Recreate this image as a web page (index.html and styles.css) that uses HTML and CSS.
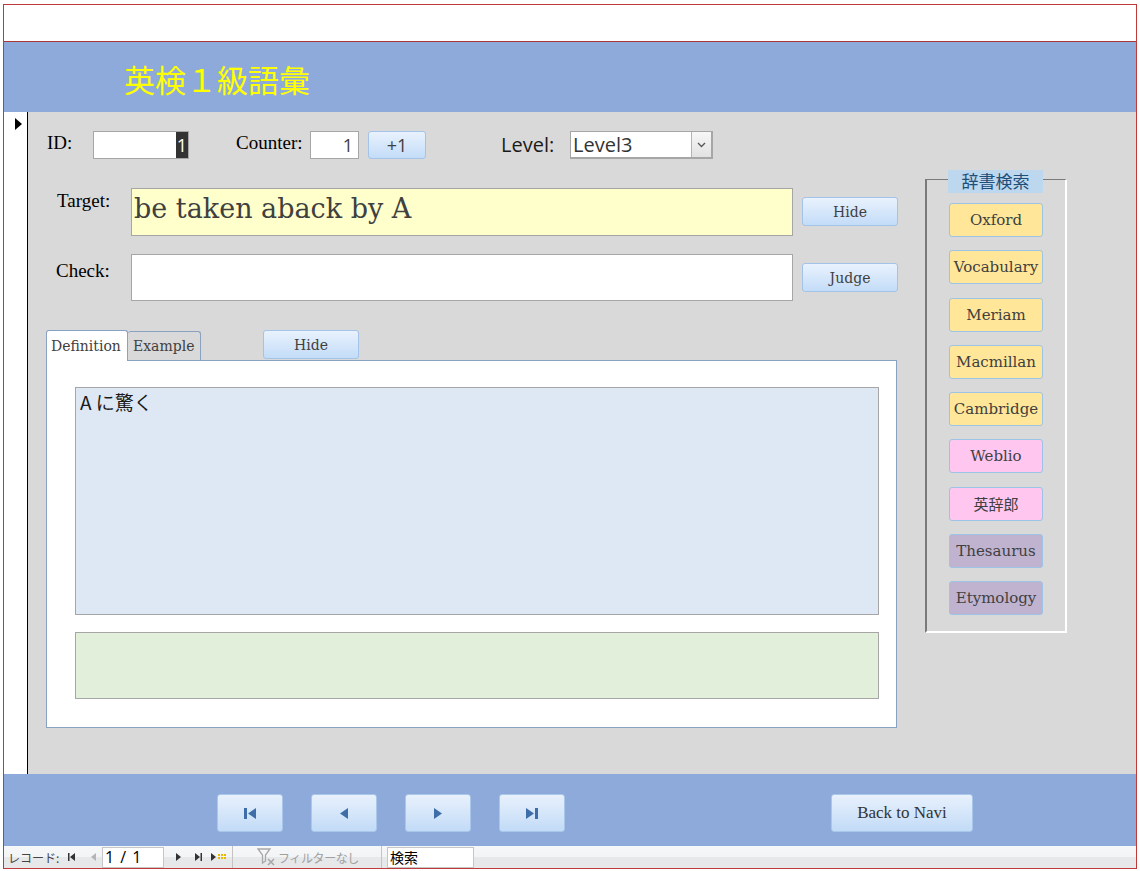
FILE: index.html
```html
<!DOCTYPE html>
<html lang="ja">
<head>
<meta charset="utf-8">
<title>英検１級語彙</title>
<link rel="stylesheet" href="styles.css">
</head>
<body>
<div class="frame">
  <div class="topstrip"></div>
  <div class="header"><h1 class="title">英検１級語彙</h1></div>
  <div class="body">
    <div class="selector">
      <svg width="8" height="12" viewBox="0 0 8 12"><polygon points="0,0 7,6 0,12" fill="#000"/></svg>
    </div>
    <div class="content">
      <div class="form">
        <div class="row row1">
          <span class="lbl lbl-id">ID:</span>
          <div class="field field-id"><span class="sel">1</span></div>
          <span class="lbl lbl-counter">Counter:</span>
          <div class="field field-counter">1</div>
          <button class="btn btn-plus">+1</button>
          <span class="lbl-level">Level:</span>
          <div class="combo">
            <span class="combo-text">Level3</span>
            <span class="combo-btn"><svg width="9" height="6" viewBox="0 0 9 6"><polyline points="1,1 4.5,4.5 8,1" fill="none" stroke="#555" stroke-width="1.3"/></svg></span>
          </div>
        </div>
        <div class="row row2">
          <span class="lbl lbl-target">Target:</span>
          <div class="field field-big field-target">be taken aback by A</div>
          <button class="btn btn-side">Hide</button>
        </div>
        <div class="row row3">
          <span class="lbl lbl-check">Check:</span>
          <div class="field field-big field-check"></div>
          <button class="btn btn-side">Judge</button>
        </div>
        <div class="tabbar">
          <div class="tab tab-active">Definition</div>
          <div class="tab">Example</div>
          <button class="btn btn-tabhide">Hide</button>
        </div>
        <div class="panel">
          <div class="defbox">A に驚く</div>
          <div class="exbox"></div>
        </div>
      </div>
      <div class="dict">
        <div class="legend">辞書検索</div>
        <div class="dict-list">
          <button class="dbtn yellow">Oxford</button>
          <button class="dbtn yellow">Vocabulary</button>
          <button class="dbtn yellow">Meriam</button>
          <button class="dbtn yellow">Macmillan</button>
          <button class="dbtn yellow">Cambridge</button>
          <button class="dbtn pink">Weblio</button>
          <button class="dbtn pink">英辞郎</button>
          <button class="dbtn purple">Thesaurus</button>
          <button class="dbtn purple">Etymology</button>
        </div>
      </div>
    </div>
  </div>
  <div class="navbar">
    <button class="nbtn"><svg width="12" height="11" viewBox="0 0 12 11"><rect x="0" y="0" width="3" height="11" fill="#3d6ea8"/><polygon points="12,0 4,5.5 12,11" fill="#3d6ea8"/></svg></button>
    <button class="nbtn"><svg width="8" height="11" viewBox="0 0 8 11"><polygon points="8,0 0,5.5 8,11" fill="#3d6ea8"/></svg></button>
    <button class="nbtn"><svg width="8" height="11" viewBox="0 0 8 11"><polygon points="0,0 8,5.5 0,11" fill="#3d6ea8"/></svg></button>
    <button class="nbtn"><svg width="12" height="11" viewBox="0 0 12 11"><polygon points="0,0 8,5.5 0,11" fill="#3d6ea8"/><rect x="9" y="0" width="3" height="11" fill="#3d6ea8"/></svg></button>
    <button class="nbtn nbtn-back">Back to Navi</button>
  </div>
  <div class="status">
    <span class="st-label">レコード:</span>
    <svg class="st-first" width="7" height="8" viewBox="0 0 7 8"><rect x="0" y="0" width="1.5" height="8" fill="#333"/><polygon points="7,0 2,4 7,8" fill="#333"/></svg>
    <svg class="st-prev" width="5" height="8" viewBox="0 0 5 8"><polygon points="5,0 0,4 5,8" fill="#b5b5b5"/></svg>
    <div class="st-input">1 / 1</div>
    <svg class="st-next" width="5" height="8" viewBox="0 0 5 8"><polygon points="0,0 5,4 0,8" fill="#333"/></svg>
    <svg class="st-last" width="7" height="8" viewBox="0 0 7 8"><polygon points="0,0 5,4 0,8" fill="#333"/><rect x="5.5" y="0" width="1.5" height="8" fill="#333"/></svg>
    <svg class="st-new" width="15" height="8" viewBox="0 0 15 8"><polygon points="0,0 5,4 0,8" fill="#333"/><g fill="#e8b800"><rect x="7" y="1" width="2" height="2"/><rect x="10" y="1" width="2" height="2"/><rect x="13" y="1" width="2" height="2"/><rect x="7" y="4" width="2" height="2"/><rect x="10" y="4" width="2" height="2"/><rect x="13" y="4" width="2" height="2"/></g></svg>
    <span class="st-sep st-sep1"></span>
    <span class="st-filter">
      <svg width="18" height="18" viewBox="0 0 18 18"><polygon points="1,1 13,1 8.5,7 8.5,13 5.5,15 5.5,7" fill="none" stroke="#a8a8a8" stroke-width="1.3"/><path d="M11 11 L17 17 M17 11 L11 17" stroke="#a8a8a8" stroke-width="1.6"/></svg>
      <span>フィルターなし</span>
    </span>
    <span class="st-sep st-sep2"></span>
    <div class="st-search">検索</div>
  </div>
</div>
</body>
</html>
```

FILE: styles.css
```css
* { box-sizing: border-box; }

body {
  margin: 0;
  background: #fff;
  font-family: "Liberation Serif", serif;
}

button {
  font: inherit;
  margin: 0;
  padding: 0;
  cursor: pointer;
}

.frame {
  margin: 4px 0 0 3px;
  width: 1134px;
  height: 865px;
  border: 1px solid #bf3b3b;
  display: flex;
  flex-direction: column;
  overflow: hidden;
}

.topstrip {
  flex: none;
  height: 37px;
  background: #fff;
  border-bottom: 1px solid #a83838;
}

.header {
  flex: none;
  height: 70px;
  background: #8eaadb;
  padding: 14px 0 0 120px;
}

.title {
  margin: 0;
  font-family: "Noto Sans CJK JP", sans-serif;
  font-weight: 400;
  font-size: 31px;
  line-height: normal;
  color: #ffff00;
}

.body {
  flex: none;
  height: 662px;
  background: #d9d9d9;
  display: flex;
}

.selector {
  flex: none;
  width: 24px;
  background: #fff;
  border-right: 1px solid #000;
  padding: 6px 0 0 11px;
}

.selector svg { display: block; }

.content {
  flex: 1;
  display: flex;
}

.form {
  flex: none;
  width: 872px;
}

.row {
  display: flex;
  align-items: flex-start;
}

.row1 { margin-top: 19px; height: 28px; }
.row2 { margin-top: 29px; }
.row3 { margin-top: 18px; }

.lbl {
  font-family: "Liberation Serif", serif;
  font-size: 19px;
  line-height: 24px;
  color: #000;
  flex: none;
}

.lbl-id { margin-left: 19px; width: 46px; }
.lbl-counter { margin-left: 47px; width: 74px; }
.lbl-target { margin-left: 29px; width: 74px; margin-top: 1px; }
.lbl-check { margin-left: 28px; width: 75px; margin-top: 5px; }

.field {
  flex: none;
  background: #fff;
  border: 1px solid #a6a6a6;
}

.field-id {
  width: 96px;
  height: 28px;
  display: flex;
  justify-content: flex-end;
}

.sel {
  width: 12px;
  height: 100%;
  background: #333;
  color: #fff;
  font-family: "Open Sans", sans-serif;
  font-size: 18px;
  line-height: 26px;
  text-align: center;
}

.field-counter {
  width: 49px;
  height: 28px;
  text-align: right;
  padding-right: 5px;
  font-family: "Open Sans", sans-serif;
  font-size: 18px;
  line-height: 26px;
  color: #404040;
}

.btn {
  flex: none;
  border: 1px solid #a3c3e8;
  border-radius: 3px;
  background: linear-gradient(#e9f2fd, #c3dcf8);
  color: #404040;
}

.btn-plus {
  margin-left: 9px;
  width: 58px;
  height: 28px;
  font-family: "Open Sans", sans-serif;
  font-size: 18px;
  line-height: 24px;
}

.lbl-level {
  flex: none;
  margin-left: 75px;
  width: 69px;
  font-family: "Open Sans", sans-serif;
  font-size: 20px;
  line-height: 28px;
  color: #1a1a1a;
}

.combo {
  flex: none;
  width: 143px;
  height: 28px;
  background: #fff;
  border: 1px solid #a6a6a6;
  border-right-width: 2px;
  border-bottom-width: 2px;
  display: flex;
}

.combo-text {
  flex: 1;
  padding-left: 2px;
  font-family: "Open Sans", sans-serif;
  font-size: 20px;
  line-height: 26px;
  color: #333;
}

.combo-btn {
  flex: none;
  width: 20px;
  background: linear-gradient(#f7f7f7, #e2e2e2);
  border-left: 1px solid #b4b4b4;
  display: flex;
  align-items: center;
  justify-content: center;
}

.field-big {
  width: 662px;
}

.field-target {
  height: 48px;
  background: #ffffcc;
  font-family: "DejaVu Serif", serif;
  font-size: 27px;
  line-height: 40px;
  padding-left: 2px;
  color: #404040;
}

.field-check {
  height: 47px;
}

.btn-side {
  margin-left: 9px;
  margin-top: 9px;
  width: 96px;
  height: 29px;
  font-family: "DejaVu Serif", serif;
  font-size: 14px;
}

.tabbar {
  margin-top: 30px;
  margin-left: 18px;
  height: 29px;
  display: flex;
  align-items: flex-end;
  position: relative;
  z-index: 1;
}

.tab {
  flex: none;
  height: 29px;
  background: #d9d9d9;
  border: 1px solid #8ba1c0;
  border-bottom: none;
  border-radius: 3px 3px 0 0;
  font-family: "DejaVu Serif", serif;
  font-size: 14px;
  line-height: 29px;
  color: #404040;
  padding: 0 4px;
}

.tab-active {
  height: 31px;
  margin-bottom: -1px;
  background: #fff;
  width: 82px;
  padding: 0 0 0 4px;
  line-height: 30px;
}

.tab + .tab {
  width: 73px;
  border-left: none;
  padding-left: 5px;
}

.btn-tabhide {
  align-self: flex-start;
  margin-top: -1px;
  margin-left: 62px;
  width: 96px;
  height: 29px;
  font-family: "DejaVu Serif", serif;
  font-size: 14px;
}

.panel {
  margin-left: 18px;
  width: 851px;
  height: 368px;
  background: #fff;
  border: 1px solid #8ba1c0;
  padding: 26px 0 0 28px;
}

.defbox {
  width: 804px;
  height: 228px;
  background: #dde8f4;
  border: 1px solid #a6a6a6;
  padding-left: 4px;
  font-family: "Noto Sans CJK JP", sans-serif;
  font-size: 19px;
  line-height: 28px;
  color: #1a1a1a;
}

.exbox {
  margin-top: 17px;
  width: 804px;
  height: 67px;
  background: #e2efda;
  border: 1px solid #a6a6a6;
}

.dict {
  flex: none;
  margin-left: 25px;
  margin-top: 67px;
  width: 142px;
  height: 454px;
  border-style: solid;
  border-color: #7a7a7a #fff #fff #7a7a7a;
  border-width: 1px 2px 2px 2px;
}

.legend {
  margin: -10px 0 0 21px;
  width: 95px;
  height: 23px;
  background: #bdd7ee;
  font-family: "Noto Sans CJK JP", sans-serif;
  font-size: 17px;
  line-height: 22px;
  text-align: center;
  color: #1f4e79;
}

.dict-list {
  margin: 10px 0 0 22px;
  display: flex;
  flex-direction: column;
  gap: 13.25px;
}

.dbtn {
  width: 94px;
  height: 34px;
  border: 1px solid #9dc3e6;
  border-radius: 3px;
  font-family: "DejaVu Serif", "Noto Sans CJK JP", serif;
  font-size: 15px;
  color: #404040;
  padding: 0;
}

.yellow { background: #ffe699; }
.pink { background: #ffc6ef; }
.purple { background: #c0b3d0; }

.navbar {
  flex: none;
  height: 72px;
  background: #8eaadb;
  padding: 20px 0 0 213px;
  display: flex;
  align-items: flex-start;
  gap: 28px;
}

.nbtn {
  flex: none;
  width: 66px;
  height: 38px;
  border: 1px solid #a9c7ea;
  border-radius: 3px;
  background: linear-gradient(#e8f1fc, #c2dbf7);
  display: flex;
  align-items: center;
  justify-content: center;
}

.nbtn svg { display: block; }

.nbtn-back {
  margin-left: 238px;
  width: 142px;
  font-family: "Liberation Serif", serif;
  font-size: 17px;
  color: #333;
}

.status {
  flex: none;
  height: 22px;
  background: linear-gradient(#f6f7f8 0, #f3f4f5 50%, #e7e8ea 50%, #e7e8ea 100%);
  display: flex;
  align-items: center;
  font-family: "Noto Sans CJK JP", sans-serif;
  color: #444;
}

.status svg { display: block; flex: none; }

.st-label {
  flex: none;
  margin-left: 4px;
  font-size: 12px;
  width: 60px;
  overflow: hidden;
  white-space: nowrap;
}

.st-first { margin-left: 0; }
.st-prev { margin-left: 16px; }

.st-input {
  margin-left: 6px;
  width: 62px;
  height: 21px;
  align-self: flex-end;
  background: #fff;
  border: 1px solid #c6c6c6;
  font-family: "Open Sans", sans-serif;
  font-size: 16px;
  line-height: 19px;
  padding-left: 2px;
  word-spacing: 2px;
  color: #000;
}

.st-next { margin-left: 12px; }
.st-last { margin-left: 14px; }
.st-new { margin-left: 9px; }

.st-sep {
  width: 1px;
  height: 22px;
  background: #c4c4c4;
}

.st-sep1 { margin-left: 6px; }

.st-filter {
  display: flex;
  align-items: center;
  margin-left: 24px;
  font-size: 12px;
  color: #a0a0a0;
  width: 124px;
}

.st-filter span { margin-left: 3px; letter-spacing: -0.4px; }

.st-search {
  margin-left: 5px;
  width: 87px;
  height: 21px;
  align-self: flex-end;
  background: #fff;
  border: 1px solid #c6c6c6;
  font-size: 14px;
  line-height: 19px;
  padding-left: 2px;
  color: #000;
}
```
